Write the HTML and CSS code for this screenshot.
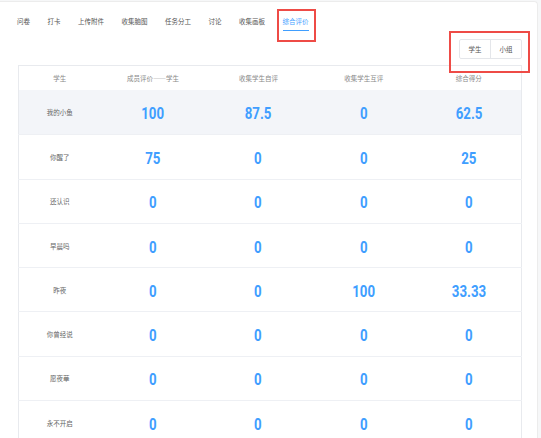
FILE: index.html
```html
<!DOCTYPE html>
<html lang="zh">
<head>
    <meta charset="UTF-8">
    <meta name="viewport" content="width=device-width, initial-scale=1.0">
    <title>综合评价</title>
    <link rel="stylesheet" href="styles.css">
</head>
<body>
    <div class="page">

        <!-- Tabs -->
        <div class="tabs">
            <span class="tab">问卷</span>
            <span class="tab">打卡</span>
            <span class="tab">上传附件</span>
            <span class="tab">收集脑图</span>
            <span class="tab">任务分工</span>
            <span class="tab">讨论</span>
            <span class="tab">收集画板</span>
            <span class="tab active">综合评价</span>
        </div>

        <!-- Student / group switch -->
        <div class="toolbar">
            <div class="switch">
                <span class="switch-btn">学生</span>
                <span class="switch-btn">小组</span>
            </div>
        </div>

        <table class="score-table">
            <colgroup>
                <col style="width: 82px">
                <col>
                <col>
                <col>
                <col>
            </colgroup>
            <thead>
                <tr>
                    <th>学生</th>
                    <th>成员评价——学生</th>
                    <th>收集学生自评</th>
                    <th>收集学生互评</th>
                    <th>综合得分</th>
                </tr>
            </thead>
            <tbody>
                <tr class="hover">
                    <td class="name">我的小鱼</td>
                    <td><span class="num">100</span></td>
                    <td><span class="num">87.5</span></td>
                    <td><span class="num">0</span></td>
                    <td><span class="num">62.5</span></td>
                </tr>
                <tr>
                    <td class="name">你醒了</td>
                    <td><span class="num">75</span></td>
                    <td><span class="num">0</span></td>
                    <td><span class="num">0</span></td>
                    <td><span class="num">25</span></td>
                </tr>
                <tr>
                    <td class="name">还认识</td>
                    <td><span class="num">0</span></td>
                    <td><span class="num">0</span></td>
                    <td><span class="num">0</span></td>
                    <td><span class="num">0</span></td>
                </tr>
                <tr>
                    <td class="name">早晨吗</td>
                    <td><span class="num">0</span></td>
                    <td><span class="num">0</span></td>
                    <td><span class="num">0</span></td>
                    <td><span class="num">0</span></td>
                </tr>
                <tr>
                    <td class="name">昨夜</td>
                    <td><span class="num">0</span></td>
                    <td><span class="num">0</span></td>
                    <td><span class="num">100</span></td>
                    <td><span class="num">33.33</span></td>
                </tr>
                <tr>
                    <td class="name">你曾经说</td>
                    <td><span class="num">0</span></td>
                    <td><span class="num">0</span></td>
                    <td><span class="num">0</span></td>
                    <td><span class="num">0</span></td>
                </tr>
                <tr>
                    <td class="name">愿夜華</td>
                    <td><span class="num">0</span></td>
                    <td><span class="num">0</span></td>
                    <td><span class="num">0</span></td>
                    <td><span class="num">0</span></td>
                </tr>
                <tr>
                    <td class="name">永不开启</td>
                    <td><span class="num">0</span></td>
                    <td><span class="num">0</span></td>
                    <td><span class="num">0</span></td>
                    <td><span class="num">0</span></td>
                </tr>
            </tbody>
        </table>

        <!-- Red annotation boxes -->
        <div class="mark mark-tab"></div>
        <div class="mark mark-switch"></div>
    </div>
</body>
</html>
```

FILE: styles.css
```css
/* Background */
body {
    margin: 0;
    background: #f6f7f8;
    font-family: "Noto Sans CJK SC", "Noto Sans", sans-serif;
    overflow: hidden;
}

/* White card */
.page {
    position: relative;
    margin-top: 1px;
    width: 538px;
    height: 437px;
    box-sizing: border-box;
    background: #fff;
    border-top: 1px solid #ececec;
    border-right: 1px solid #ececec;
    border-top-right-radius: 4px;
    overflow: hidden;
}

/* Tabs */
.tabs {
    display: flex;
    gap: 17.5px;
    padding: 14px 0 0 17px;
}

.tab {
    font-size: 6.5px;
    line-height: 10px;
    color: #555;
    padding-bottom: 4px;
    border-bottom: 1px solid transparent;
}

.tab.active {
    color: #409eff;
    border-bottom-color: #409eff;
}

/* Switch */
.toolbar {
    display: flex;
    justify-content: flex-end;
    margin-top: 8px;
    padding-right: 15px;
}

.switch {
    display: flex;
    border: 1px solid #e4e6ea;
    border-radius: 2px;
}

.switch-btn {
    width: 30px;
    height: 18px;
    line-height: 18px;
    text-align: center;
    font-size: 6.5px;
    color: #555;
}

.switch-btn + .switch-btn {
    border-left: 1px solid #e4e6ea;
}

/* Table */
.score-table {
    margin: 6px 0 0 18px;
    width: 504px;
    table-layout: fixed;
    border-collapse: collapse;
    border-top: 1px solid #e8eaee;
    border-left: 1px solid #e8eaee;
    border-right: 1px solid #e8eaee;
}

.score-table th {
    height: 24px;
    padding: 0;
    font-size: 6.5px;
    font-weight: normal;
    color: #888;
    text-align: center;
}

.score-table td {
    height: 43.3px;
    padding: 0;
    text-align: center;
    border-top: 1px solid #eef0f4;
}

.score-table tr.hover td {
    background: #f3f5f9;
    border-top: 0;
    height: 44.3px;
}

.name {
    font-size: 6.5px;
    color: #666;
}

.num {
    display: inline-block;
    font-family: Roboto, "Liberation Sans", sans-serif;
    font-weight: bold;
    font-size: 17px;
    line-height: 20px;
    color: #409eff;
    transform: scaleX(0.78);
}

/* Annotation boxes */
.mark {
    position: absolute;
    border: 2px solid #ee4b46;
    box-sizing: border-box;
}

.mark-tab {
    left: 277px;
    top: 7px;
    width: 39px;
    height: 33px;
}

.mark-switch {
    left: 449px;
    top: 29px;
    width: 81px;
    height: 42px;
}
```
